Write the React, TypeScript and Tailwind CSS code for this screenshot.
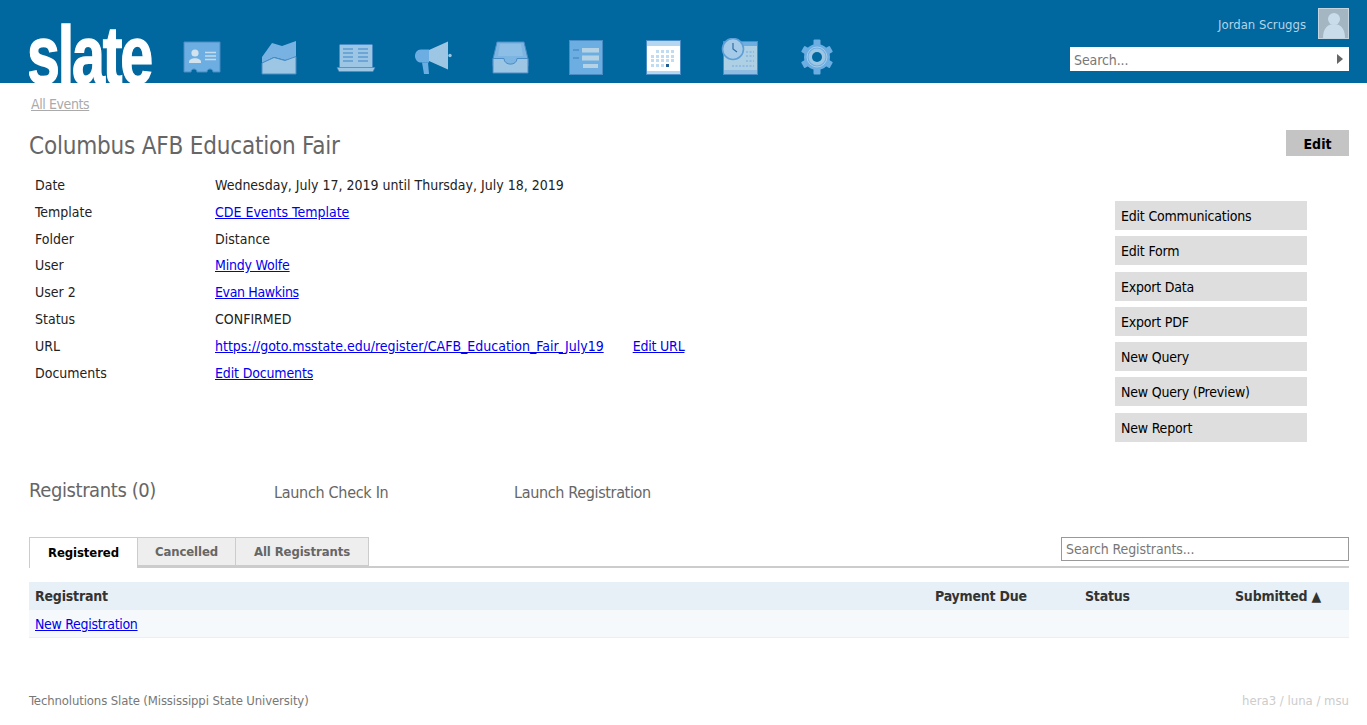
const font = "font-['DejaVu_Sans',sans-serif] [font-stretch:condensed]";

function CardIcon() {
  return (
    <svg width="40" height="40" viewBox="0 0 40 40">
      <path d="M2 4H38V34H31C31 30 25 30 25 34H15C15 30 9 30 9 34H2Z" fill="#6caee2" stroke="#4a8cc4" />
      <circle cx="13" cy="15" r="3.6" fill="#d3e3ee" />
      <path d="M7 24C7 19 19 19 19 24V25H7Z" fill="#d3e3ee" />
      <path d="M23 14.5H34M23 18H34M23 21.5H34" stroke="#c5dcec" strokeWidth="1.5" />
    </svg>
  );
}

function ChartIcon() {
  return (
    <svg width="40" height="40" viewBox="0 0 40 40">
      <path d="M3 19L13 5L23 8L37 3V20L26 22L15 19L3 25Z" fill="#78b2e2" />
      <path d="M3 25L15 19.5L26 22.5L37 18.5V36H3Z" fill="#9cc6e4" stroke="#4a8cc4" />
    </svg>
  );
}

function BookIcon() {
  return (
    <svg width="40" height="40" viewBox="0 0 40 40">
      <rect x="3.5" y="6.5" width="33" height="23" rx="1" fill="#9cc6e4" stroke="#4a8cc4" />
      <path d="M7 11H17M7 15H17M7 19H17M7 23H17M22 11H32M22 15H32M22 19H32M22 23H32" stroke="#5c9bd1" strokeWidth="1.6" />
      <path d="M1 29.5H39L37 33.5H3Z" fill="#9cc6e4" stroke="#4a8cc4" strokeWidth="0.7" />
    </svg>
  );
}

function MegaphoneIcon() {
  return (
    <svg width="40" height="40" viewBox="0 0 40 40">
      <path d="M16 12L35 3.5V31.5L16 23Z" fill="#9cc6e4" />
      <circle cx="37" cy="17.5" r="1.7" fill="#9cc6e4" />
      <path d="M16 11.5H8C4 11.5 2 14.5 2 18C2 21 4 24 7 24.5H16Z" fill="#6caee2" />
      <path d="M9 24.5H15L16 36H11Z" fill="#6caee2" />
    </svg>
  );
}

function InboxIcon() {
  return (
    <svg width="40" height="40" viewBox="0 0 40 40">
      <path d="M7 4H34L38 21V28H3V21Z" fill="#7db5e2" stroke="#4a8cc4" />
      <path d="M10 6H31L33 18H8Z" fill="#8dbee5" />
      <path d="M3 20.5H14C14 28 27 28 27 20.5H38V35H3Z" fill="#9cc6e4" stroke="#4a8cc4" />
    </svg>
  );
}

function ListIcon() {
  return (
    <svg width="40" height="40" viewBox="0 0 40 40">
      <rect x="3.5" y="2.5" width="33" height="34" fill="#6caee2" stroke="#4a8cc4" />
      <path d="M7 12H13M7 20H13" stroke="#3f80b8" strokeWidth="1.2" />
      <rect x="16" y="10" width="17" height="4.5" fill="#b5d3e4" />
      <rect x="16" y="17.5" width="17" height="5" fill="#b5d3e4" />
      <rect x="17" y="26" width="15" height="4" fill="#b5d3e4" />
    </svg>
  );
}

const calendarDots = [
  [13, 12], [18, 12], [23, 12], [28, 12],
  [8, 17], [13, 17], [18, 17], [23, 17], [28, 17],
  [8, 21], [13, 21], [18, 21], [23, 21], [28, 21],
  [8, 26], [13, 26], [18, 26],
];

function CalendarIcon() {
  return (
    <svg width="40" height="40" viewBox="0 0 40 40">
      <rect x="3.5" y="2.5" width="34" height="34" fill="#ffffff" stroke="#4a8cc4" />
      <rect x="4" y="3" width="33" height="5" fill="#b5d6f0" />
      <rect x="4" y="33" width="33" height="3" fill="#b5d6f0" />
      {calendarDots.map(([x, y]) => (
        <rect key={`${x}-${y}`} x={x} y={y} width="3" height="3" fill="#bfdcf3" />
      ))}
      <rect x="23" y="26" width="3" height="3" fill="#1f5f96" />
    </svg>
  );
}

function ScheduleIcon() {
  return (
    <svg width="40" height="40" viewBox="0 0 40 40">
      <rect x="3.5" y="3.5" width="34" height="33" fill="#add0e4" stroke="#4a8cc4" />
      <rect x="4" y="4" width="33" height="4" fill="#6caee2" />
      <rect x="4" y="32" width="33" height="4" fill="#8fbce0" />
      <path d="M12 28H34M26 14H34M26 18H34M26 23H34" stroke="#8fbce0" strokeWidth="2" strokeDasharray="2 1.5" />
      <circle cx="13" cy="11" r="10.5" fill="#a5cbe8" stroke="#5f9fd6" strokeWidth="1.6" />
      <path d="M13 5V11L17 14" fill="none" stroke="#2f6ea6" strokeWidth="1.2" />
    </svg>
  );
}

function GearIcon() {
  return (
    <svg width="40" height="40" viewBox="0 0 40 40">
      <g fill="#6caee2">
        <rect x="16.5" y="1.5" width="7" height="35" rx="1" />
        <rect x="16.5" y="2.5" width="7" height="33" rx="1" transform="rotate(60 20 19)" />
        <rect x="16.5" y="2.5" width="7" height="33" rx="1" transform="rotate(120 20 19)" />
      </g>
      <circle cx="20" cy="19" r="13" fill="#6caee2" />
      <circle cx="20" cy="19" r="10" fill="none" stroke="#a5cbe8" strokeWidth="1" />
      <circle cx="20" cy="19" r="8.5" fill="#9cc6e4" />
      <circle cx="20" cy="19" r="5" fill="#00679f" />
    </svg>
  );
}

const navIcons = [CardIcon, ChartIcon, BookIcon, MegaphoneIcon, InboxIcon, ListIcon, CalendarIcon, ScheduleIcon, GearIcon];

const details = [
  { label: "Date", value: "Wednesday, July 17, 2019 until Thursday, July 18, 2019" },
  { label: "Template", value: "CDE Events Template", link: true },
  { label: "Folder", value: "Distance" },
  { label: "User", value: "Mindy Wolfe", link: true, tight: "tracking-[-0.2px]" },
  { label: "User 2", value: "Evan Hawkins", link: true, tight: "tracking-[-0.35px]" },
  { label: "Status", value: "CONFIRMED" },
  { label: "URL", value: "https://goto.msstate.edu/register/CAFB_Education_Fair_July19", link: true, extra: "Edit URL" },
  { label: "Documents", value: "Edit Documents", link: true, tight: "tracking-[-0.15px]" },
];

const actions = ["Edit Communications", "Edit Form", "Export Data", "Export PDF", "New Query", "New Query (Preview)", "New Report"];

export default function App() {
  return (
    <div className={`h-[725px] overflow-hidden bg-white text-[14px] text-[#222] ${font}`}>
      <header className="h-[83px] bg-[#00679f] flex pl-[29px] pr-[18px] overflow-hidden">
        <div className="w-[123px] h-[83px] overflow-hidden shrink-0">
          <div className="w-fit -ml-[2px] origin-left scale-x-[0.73] font-['Liberation_Sans',sans-serif] font-bold text-white text-[81px] leading-[83px] tracking-[-3px] pt-[14px] [-webkit-text-stroke:1.5px_white]">
            slate
          </div>
        </div>
        <nav className="flex items-start pt-[38px] ml-[12px]">
          {navIcons.map((Icon, i) => (
            <div key={i} className="w-[76.8px] flex justify-center">
              <Icon />
            </div>
          ))}
        </nav>
        <div className="ml-auto w-[279px] flex flex-col items-end pt-[8px] gap-[8px]">
          <div className="flex items-center gap-[12px] h-[31px] text-[13px] text-[#b3d4e8]">
            <span className="pt-[2px]">Jordan Scruggs</span>
            <div className="w-[31px] h-[31px] border border-[#c5d5df] bg-[#a4b6c1] overflow-hidden">
              <svg width="29" height="29" viewBox="0 0 29 29">
                <circle cx="15" cy="10" r="6" fill="#c9dce9" />
                <path d="M4 29C4 19 9 15 15 15C21 15 26 19 26 29Z" fill="#c9dce9" />
              </svg>
            </div>
          </div>
          <div className="w-full h-[24px] bg-white flex items-center pl-[4px] pr-[6px]">
            <input placeholder="Search..." className="flex-1 min-w-0 pt-[2px] outline-none text-[14px] tracking-[-0.1px] placeholder:text-[#777]" />
            <span className="w-0 h-0 border-y-[5px] border-y-transparent border-l-[6px] border-l-[#666]" />
          </div>
        </div>
      </header>

      <main className="px-[18px] pl-[29px]">
        <a href="#" className="block mt-[11px] ml-[2px] w-fit leading-[20px] tracking-[-0.4px] underline text-[#aaa]">All Events</a>

        <div className="flex items-start justify-between mt-[11px]">
          <h1 className="text-[24px] leading-[42px] tracking-[-0.2px] text-[#666]">Columbus AFB Education Fair</h1>
          <button className="w-[63px] h-[26px] mt-[5px] pt-[2px] bg-[#c4c4c4] font-bold text-black">Edit</button>
        </div>

        <div className="flex items-start justify-between mt-[5px] pr-[42px]">
          <div className="pl-[6px]">
            {details.map((row) => (
              <div key={row.label} className="grid grid-cols-[180px_1fr] h-[26.85px] items-center">
                <span>{row.label}</span>
                <span className="flex gap-[29px]">
                  {row.link ? <a href="#" className={`underline text-[#0000ee] ${row.tight ?? ""}`}>{row.value}</a> : row.value}
                  {row.extra && <a href="#" className="underline tracking-[-0.2px] text-[#0000ee]">{row.extra}</a>}
                </span>
              </div>
            ))}
          </div>
          <div className="w-[192px] mt-[29px] flex flex-col gap-[6.3px]">
            {actions.map((a) => (
              <button key={a} className="h-[29px] pt-[2px] bg-[#dedede] text-left pl-[6px] tracking-[-0.2px] text-black">{a}</button>
            ))}
          </div>
        </div>

        <div className="flex items-center mt-[33px] h-[30px] text-[#666]">
          <h2 className="w-[245px] text-[20px] tracking-[-0.4px]">Registrants (0)</h2>
          <span className="w-[240px] text-[16px] tracking-[-0.3px] mt-[6px]">Launch Check In</span>
          <span className="text-[16px] tracking-[-0.35px] mt-[6px]">Launch Registration</span>
        </div>

        <div className="flex items-start justify-between mt-[32px] border-b-2 border-[#ccc] h-[31px]">
          <div className="flex h-[29px] font-bold text-[13px] tracking-[-0.1px]">
            <div className="w-[109px] border border-b-0 border-[#ccc] bg-white text-black flex items-center justify-center h-[31px] relative z-10">Registered</div>
            <div className="w-[98px] border border-l-0 border-[#ccc] bg-[#eee] text-[#666] flex items-center justify-center pt-[1px]">Cancelled</div>
            <div className="w-[133px] border border-l-0 border-[#ccc] bg-[#eee] text-[#666] flex items-center justify-center pt-[1px]">All Registrants</div>
          </div>
          <input placeholder="Search Registrants..." className="w-[288px] h-[24px] border border-[#999] px-[4px] outline-none text-[14px] tracking-[-0.1px] placeholder:text-[#777]" />
        </div>

        <div className="mt-[14px] h-[28px] pt-[2px] bg-[#e7f0f6] grid grid-cols-[900px_150px_150px_1fr] items-center pl-[6px] font-bold tracking-[-0.2px] text-[#333]">
          <span>Registrant</span>
          <span>Payment Due</span>
          <span>Status</span>
          <span>Submitted ▲</span>
        </div>
        <div className="h-[28px] pt-[2px] bg-[#f5f9fc] border-b border-[#e7f0f6] flex items-center pl-[6px]">
          <a href="#" className="underline tracking-[-0.3px] text-[#0000ee]">New Registration</a>
        </div>

        <footer className="flex justify-between items-center mt-[53px] h-[20px] text-[13px]">
          <span className="tracking-[-0.12px] text-[#777]">Technolutions Slate (Mississippi State University)</span>
          <span className="text-[#ccc]">hera3 / luna / msu</span>
        </footer>
      </main>
    </div>
  );
}
